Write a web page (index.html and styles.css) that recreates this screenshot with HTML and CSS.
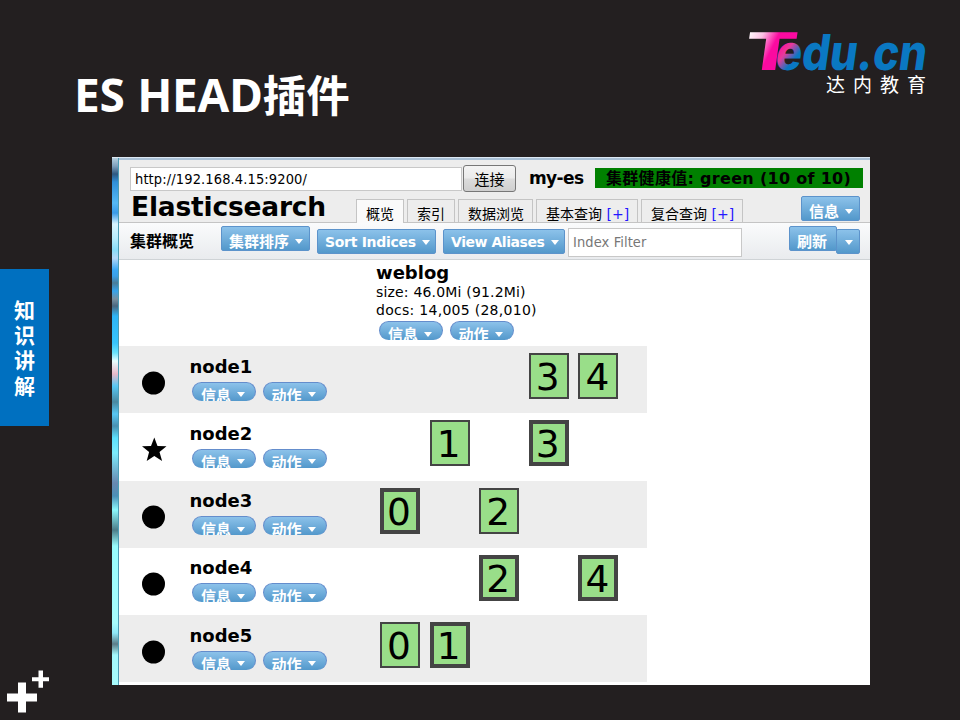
FILE: index.html
```html
<!DOCTYPE html>
<html lang="zh-CN">
<head>
<meta charset="utf-8">
<title>ES HEAD插件</title>
<link rel="stylesheet" href="styles.css">
</head>
<body>
<div class="slide">
  <header class="slide-header">
    <h1><span class="latin">ES HEAD</span><span class="han">插件</span></h1>
    <svg class="logo" width="200" height="85" viewBox="0 0 200 85">
      <defs>
        <linearGradient id="gt" x1="0" y1="0" x2="1" y2="0.5">
          <stop offset="0.1" stop-color="#fff"/><stop offset="0.35" stop-color="#fcc0e4"/><stop offset="0.6" stop-color="#fb0aa0"/><stop offset="1" stop-color="#fb0aa0"/>
        </linearGradient>
        <linearGradient id="ge" gradientUnits="userSpaceOnUse" x1="0" y1="-18" x2="22" y2="-4">
          <stop offset="0" stop-color="#ff1296"/><stop offset="0.3" stop-color="#e83a9c"/><stop offset="0.75" stop-color="#0a78c2"/>
        </linearGradient>
      </defs>
      <text class="logo-t" transform="translate(11 50) skewX(-8)" x="-8" y="0" textLength="51" lengthAdjust="spacingAndGlyphs" fill="url(#gt)">T</text>
      <text class="logo-w" transform="translate(34 50) skewX(-8)" x="0" y="0" textLength="151" lengthAdjust="spacingAndGlyphs" fill="url(#ge)">edu.cn</text>
      <text class="logo-s" x="86" y="72">达内教育</text>
    </svg>
  </header>
  <div class="slide-body">
    <aside>
      <div class="chapter"><span>知</span><span>识</span><span>讲</span><span>解</span></div>
      <svg class="plus" width="44" height="44" viewBox="0 0 44 44"><path d="M15 12.500h8v11h11v8H23v11h-8v-11H4v-8h11z M35.500 .5h4.500v6.800h6v4h-6v6.500h-4.500v-6.500H29v-4h6.500z" transform="translate(-4 0)" fill="#fff"/></svg>
    </aside>
    <main class="window">
      <div class="frame-edge"></div>
      <div class="app">
        <div class="masthead">
          <div class="connect">
            <div class="url"><span>http://192.168.4.15:9200/</span></div>
            <div class="go">连接</div>
            <b class="cluster">my-es</b>
            <div class="health"><span>集群健康值: green (10 of 10)</span></div>
          </div>
          <div class="nav">
            <div class="brand">Elasticsearch</div>
            <div class="tab t1 on">概览</div>
            <div class="tab t2">索引</div>
            <div class="tab t3">数据浏览</div>
            <div class="tab t4">基本查询 <i>[+]</i></div>
            <div class="tab t5">复合查询 <i>[+]</i></div>
            <div class="btn info">信息<s></s></div>
          </div>
        </div>
        <div class="toolbar">
          <b class="heading">集群概览</b>
          <div class="btn sort">集群排序<s></s></div>
          <div class="btn low indices"><span>Sort Indices</span><s></s></div>
          <div class="btn low aliases"><span>View Aliases</span><s></s></div>
          <div class="filter">Index Filter</div>
          <div class="btn refresh">刷新</div>
          <div class="btn low more"><s></s></div>
        </div>
        <div class="index">
          <div class="index-name">weblog</div>
          <div class="stat size">size: 46.0Mi (91.2Mi)</div>
          <div class="stat docs">docs: 14,005 (28,010)</div>
          <div class="pills"><div class="pill">信息<s></s></div><div class="pill">动作<s></s></div></div>
        </div>
        <div class="nodes">
          <div class="node">
            <svg class="mark" width="26" height="26"><circle cx="12.500" cy="13" r="11.500"/></svg>
            <div class="who"><b>node1</b><div class="pills"><div class="pill">信息<s></s></div><div class="pill">动作<s></s></div></div></div>
            <div class="shard c3">3</div><div class="shard c4">4</div>
          </div>
          <div class="node">
            <svg class="mark" width="26" height="26"><path d="M13.300 .5l3.200 8.500 9 .3-7 5.800 2.600 8.800-7.800-5-7.600 5 2.400-8.800L1 9.300l9-.3z"/></svg>
            <div class="who"><b>node2</b><div class="pills"><div class="pill">信息<s></s></div><div class="pill">动作<s></s></div></div></div>
            <div class="shard c1">1</div><div class="shard primary c3">3</div>
          </div>
          <div class="node">
            <svg class="mark" width="26" height="26"><circle cx="12.500" cy="13" r="11.500"/></svg>
            <div class="who"><b>node3</b><div class="pills"><div class="pill">信息<s></s></div><div class="pill">动作<s></s></div></div></div>
            <div class="shard primary c0">0</div><div class="shard c2">2</div>
          </div>
          <div class="node">
            <svg class="mark" width="26" height="26"><circle cx="12.500" cy="13" r="11.500"/></svg>
            <div class="who"><b>node4</b><div class="pills"><div class="pill">信息<s></s></div><div class="pill">动作<s></s></div></div></div>
            <div class="shard primary c2">2</div><div class="shard primary c4">4</div>
          </div>
          <div class="node">
            <svg class="mark" width="26" height="26"><circle cx="12.500" cy="13" r="11.500"/></svg>
            <div class="who"><b>node5</b><div class="pills"><div class="pill">信息<s></s></div><div class="pill">动作<s></s></div></div></div>
            <div class="shard c0">0</div><div class="shard primary c1">1</div>
          </div>
        </div>
      </div>
    </main>
  </div>
</div>
</body>
</html>
```
FILE: styles.css
```css
* { box-sizing: border-box; }
body { margin: 0; background: #231f20; font-family: "DejaVu Sans", "Noto Sans CJK SC", sans-serif; color: #000; }
.slide { width: 960px; height: 720px; overflow: hidden; background: #231f20; white-space: nowrap; }
.slide-header { height: 157px; display: flex; justify-content: space-between; padding: 20px 20px 0 74px; }
h1 { margin: 41px 0 0; height: 66px; display: flex; color: #fff; font: bold 46px/66px "Open Sans", sans-serif; }
h1 .latin { letter-spacing: -0.3px; word-spacing: 1px; }
h1 .han { font: bold 43.500px/66px "Noto Sans CJK SC", sans-serif; }
.logo { font-family: "Open Sans", sans-serif; overflow: visible; }
.logo-t { font-size: 53px; font-weight: 700; }
.logo-w { font-family: Inter, sans-serif; font-size: 49.500px; font-weight: 800; }
.logo-s { font: 19px "Noto Sans CJK SC", sans-serif; letter-spacing: 8px; fill: #fff; }

.slide-body { display: flex; height: 563px; }
aside { width: 112px; padding-top: 112px; display: flex; flex-direction: column; }
.chapter { width: 49px; height: 157px; background: #0070c0; color: #fff; display: flex; flex-direction: column; align-items: center; padding-top: 28px; font: bold 21px/25.200px "Noto Sans CJK SC", sans-serif; }
.plus { margin: 244px 0 0 7px; overflow: visible; }

.window { width: 758px; height: 528px; display: flex; background: #fff; border-top: 1px solid #dce8f4; overflow: hidden; }
.frame-edge { width: 7px; border-right: 1px solid #4c9cb4; background: linear-gradient(#b4cede 0, #7fa0bc 8px, #2e5880 16px, #2f8fd8 24px, #55b8f4 45px, #3a9ae8 55px, #d8f4ff 66px, #b8ecfc 80px, #88dcf8 92px, #b4d8f8 100px, #3aa8f4 112px, #3aa0e8 118px, #4a7c98 125px, #36a4ec 133px, #7890a0 141px, #4a6880 148px, #2eb4f4 158px, #38c4fc 185px, #6ce4fc 195px, #e8ffff 203px, #e8b8c8 216px, #58c8f4 228px, #4a88a0 244px, #58c8f4 256px, #4a90b0 268px, #5ce0fc 280px, #7cecfc 295px, #6888b0 325px, #4c90b8 338px, #8cf8fc 352px, #4c7c88 372px, #98fcfc 388px, #a8fcfc 465px, #90e8f8 475px, #5c7c88 486px, #a4f8fc 497px, #a8fcfc 528px); }
.app { width: 751px; }
.masthead { height: 65px; background: #ededed; border-top: 2px solid #a9c0d6; display: flex; flex-direction: column; justify-content: space-between; }
.connect { display: flex; padding: 5px 0 0 11px; height: 34px; }
.url { width: 332px; height: 24px; margin-top: 2px; border: 1px solid #c8c8c8; background: #fff; padding-left: 4px; font: 14.500px/23px "DejaVu Sans Condensed", "DejaVu Sans", sans-serif; letter-spacing: .12px; }
.go { width: 53px; height: 27px; margin-left: 1px; border: 1.500px solid #777; border-radius: 3px; background: linear-gradient(#f4f4f4, #ebebeb 48%, #dcdcdc 52%, #cfcfcf); text-align: center; font: 15px/26px "Noto Sans CJK SC", sans-serif; }
.cluster { width: 66px; margin-left: 13px; font-size: 17px; line-height: 27px; letter-spacing: -0.6px; }
.health { width: 268px; height: 20px; margin-top: 3px; background: #008000; padding-left: 11px; font: bold 16px/21px "DejaVu Sans", "Noto Sans CJK SC", sans-serif; letter-spacing: .3px; }
.nav { display: flex; align-items: flex-end; height: 29px; border-bottom: 1px solid #c4c4c4; }
.brand { width: 225px; margin-left: 12px; font: bold 26.500px/31px "DejaVu Sans", sans-serif; letter-spacing: -0.2px; }
.tab { height: 23px; margin-right: 3px; border: 1px solid #c4c4c4; border-bottom: 0; padding-left: 9px; font: 14px/28px "DejaVu Sans", "Noto Sans CJK SC", sans-serif; overflow: hidden; }
.tab.on { background: #fafafa; height: 24px; margin-bottom: -1px; }
.tab i { font-style: normal; color: #2418ff; }
.t1, .t2 { width: 48px; }
.t3 { width: 75px; }
.t4, .t5 { width: 102px; }
.btn { height: 25px; border: 1px solid #5c93cb; border-radius: 2px; background: linear-gradient(#8cc2ea, #5398cb); color: #fff; font: bold 15px/27px "Noto Sans CJK SC", sans-serif; padding-left: 7px; display: flex; flex: none; }
.btn s, .pill s { width: 0; height: 0; border: 4.500px solid transparent; border-top: 5px solid #fff; border-bottom: 0; flex: none; }
.btn s { margin: 12px 0 0 6px; }
.info { width: 59px; margin: 0 0 1px 55px; }
.toolbar { height: 37px; display: flex; padding: 3px 0 0 11px; background: linear-gradient(#fafbfc, #e9ebee); border-bottom: 1px solid #cfd3d6; }
.heading { width: 91px; font: bold 16px/28px "Noto Sans CJK SC", sans-serif; }
.sort { width: 89px; }
.low { margin-top: 3px; font: bold 14px/24px "DejaVu Sans", sans-serif; letter-spacing: -.3px; }
.low s { margin-top: 10px; }
.indices { width: 119px; margin-left: 7px; }
.aliases { width: 122px; margin-left: 7px; letter-spacing: -.45px; }
.aliases s { margin-left: 7px; }
.filter { width: 174px; height: 29px; margin: 2px 0 0 3px; border: 1px solid #c8c8c8; background: #fff; color: #777; padding-left: 4px; font: 14.500px/26px "DejaVu Sans Condensed", "DejaVu Sans", sans-serif; letter-spacing: .1px; }
.refresh { width: 48px; margin-left: 47px; }
.more { width: 24px; margin-left: -1px; padding: 0; }
.more s { margin-left: 8px; }

.index { height: 86px; padding: 1px 0 0 257px; }
.index-name { font: bold 18px/23px "DejaVu Sans", sans-serif; }
.stat { font: 14px/17.500px "DejaVu Sans", sans-serif; letter-spacing: .28px; }
.size { letter-spacing: .18px; }
.pills { display: flex; gap: 6.500px; margin-left: 3px; }
.index .pills { margin-top: 2px; }
.pill { width: 64px; height: 19px; border: 1px solid #648dcc; border-top-width: 1.500px; border-bottom: 0; border-radius: 10px; background: linear-gradient(#8cc2ea, #5398cb); color: #fff; overflow: hidden; display: flex; padding-left: 8px; font: bold 15px/23px "Noto Sans CJK SC", sans-serif; }
.pill s { margin: 9.500px 0 0 6px; }
.node { width: 528px; height: 67.250px; display: grid; grid-template-columns: 22px 48.500px 190.500px repeat(5, 49.600px); }
.node:nth-child(odd) { background: #ededed; }
.mark { grid-column: 2; grid-row: 1; margin-top: 23.600px; }
.who { grid-column: 3; grid-row: 1; padding-top: 9.700px; }
.who b { display: block; font: bold 18px/22px "DejaVu Sans", sans-serif; letter-spacing: 0; }
.who .pills { margin-top: 4px; margin-left: 2.500px; }
.shard { grid-row: 1; width: 40px; height: 46px; margin-top: 7px; border: 2px solid #444; background: #99de89; display: flex; justify-content: center; align-items: center; font: 37.500px/44px "DejaVu Sans", sans-serif; padding-top: 2px; padding-right: 2px; }
.primary { border-width: 4px; }
.c0 { grid-column: 4; }
.c1 { grid-column: 5; }
.c2 { grid-column: 6; }
.c3 { grid-column: 7; }
.c4 { grid-column: 8; }
```
